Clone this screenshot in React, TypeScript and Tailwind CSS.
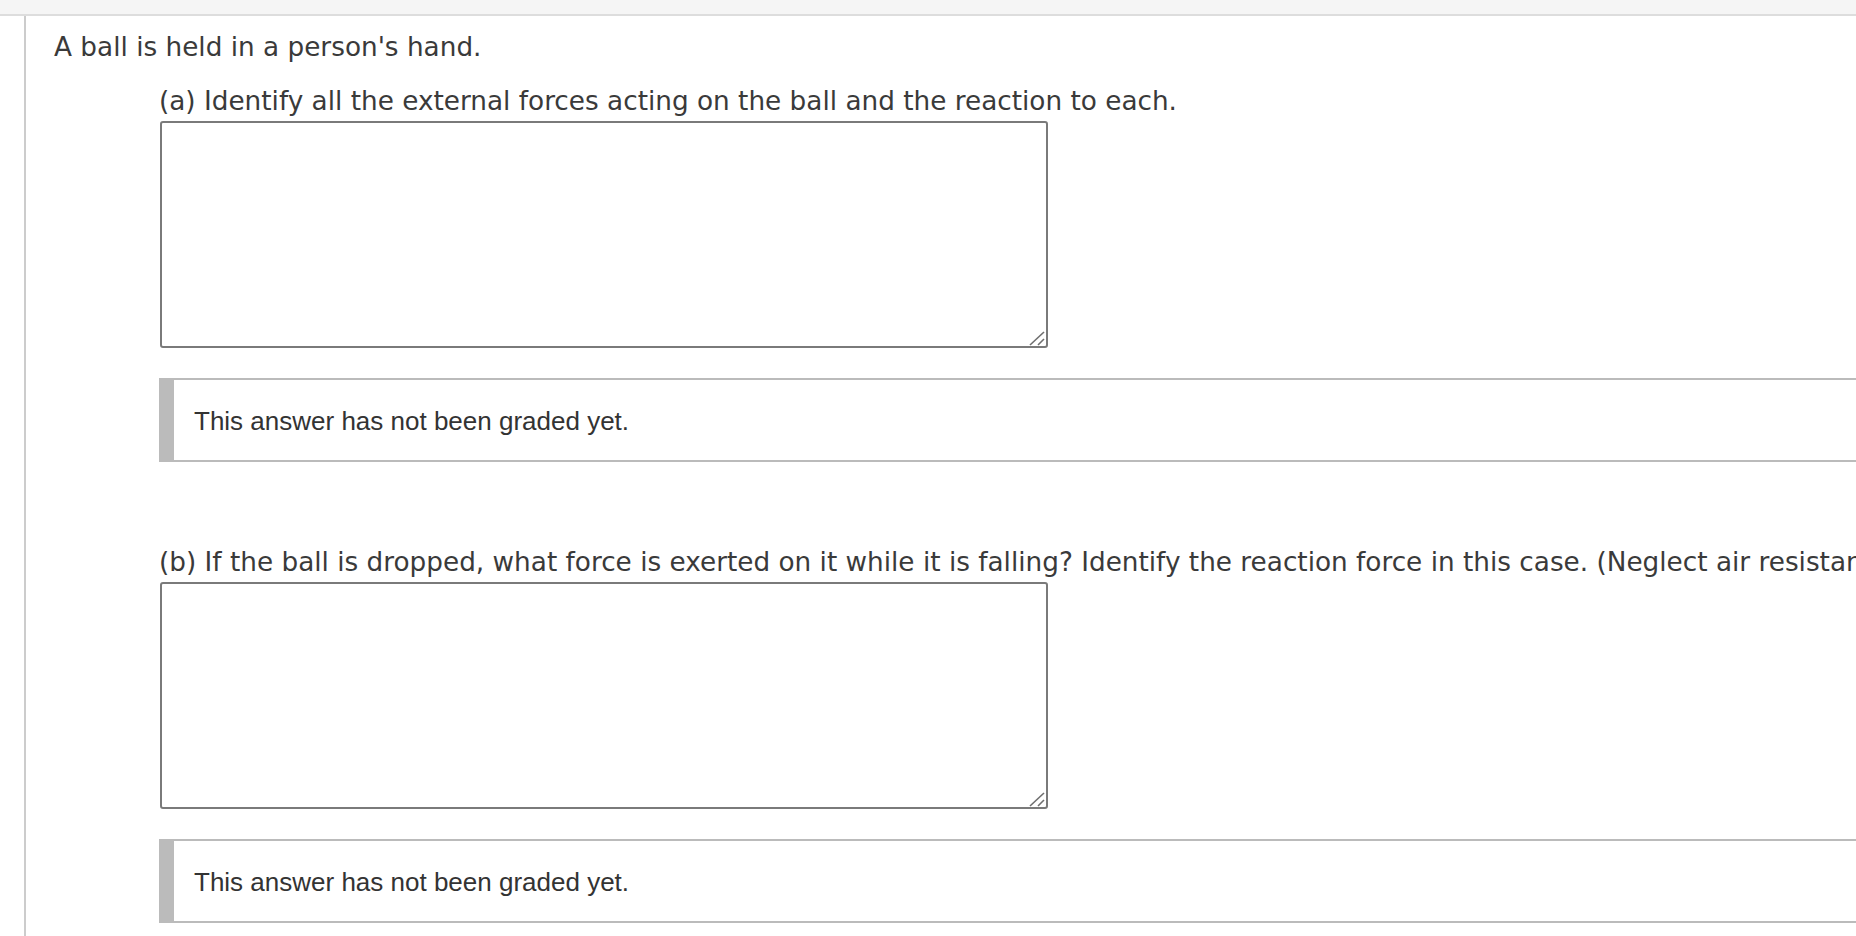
import React from "react";

function Graded() {
  return (
    <div className="flex h-[84px] w-[1800px] border-y-2 border-[#bbbbbb] bg-white">
      <div className="w-[15px] shrink-0 bg-[#bbbbbb]" />
      <div
        className="flex items-center pl-[20px] pt-[1px] text-[26px] leading-[30px] text-[#333333]"
        style={{ fontFamily: '"Liberation Sans", Arial, sans-serif' }}
      >
        This answer has not been graded yet.
      </div>
    </div>
  );
}

function Part({ label }: { label: string }) {
  return (
    <div className="flex flex-col">
      <div className="whitespace-nowrap text-[26.3px] leading-[30px] text-[#3a3a3a]">{label}</div>
      <div className="relative mt-[5px] ml-[1px] h-[227px] w-[888px]">
        <textarea className="block h-full w-full resize-none rounded-[3px] border-2 border-[#7a7a7a] bg-white outline-none" />
        <svg
          className="pointer-events-none absolute bottom-0 right-0"
          width="20"
          height="20"
          viewBox="0 0 20 20"
        >
          <line x1="2" y1="17" x2="16" y2="4" stroke="#6f6f6f" strokeWidth="1.6" />
          <line x1="10" y1="17" x2="16" y2="11" stroke="#6f6f6f" strokeWidth="1.6" />
        </svg>
      </div>
      <div className="mt-[30px]">
        <Graded />
      </div>
    </div>
  );
}

export default function App() {
  return (
    <div
      className="relative flex h-[936px] w-[1856px] flex-col overflow-hidden bg-white"
      style={{ fontFamily: '"DejaVu Sans", Verdana, sans-serif' }}
    >
      <div className="h-[16px] w-full shrink-0 border-b-2 border-[#dddddd] bg-[#f5f5f5]" />
      <div className="flex flex-1">
        <div className="ml-[24px] w-[2px] shrink-0 bg-[#cccccc]" />
        <div className="flex flex-col pl-[28px] pt-[16px]">
          <div className="whitespace-nowrap text-[26.3px] leading-[30px] text-[#3a3a3a]">
            A ball is held in a person's hand.
          </div>
          <div className="mt-[24px] flex flex-col pl-[105px]">
            <Part label="(a) Identify all the external forces acting on the ball and the reaction to each." />
            <div className="mt-[85px]">
              <Part label="(b) If the ball is dropped, what force is exerted on it while it is falling? Identify the reaction force in this case. (Neglect air resistance.)" />
            </div>
          </div>
        </div>
      </div>
    </div>
  );
}
